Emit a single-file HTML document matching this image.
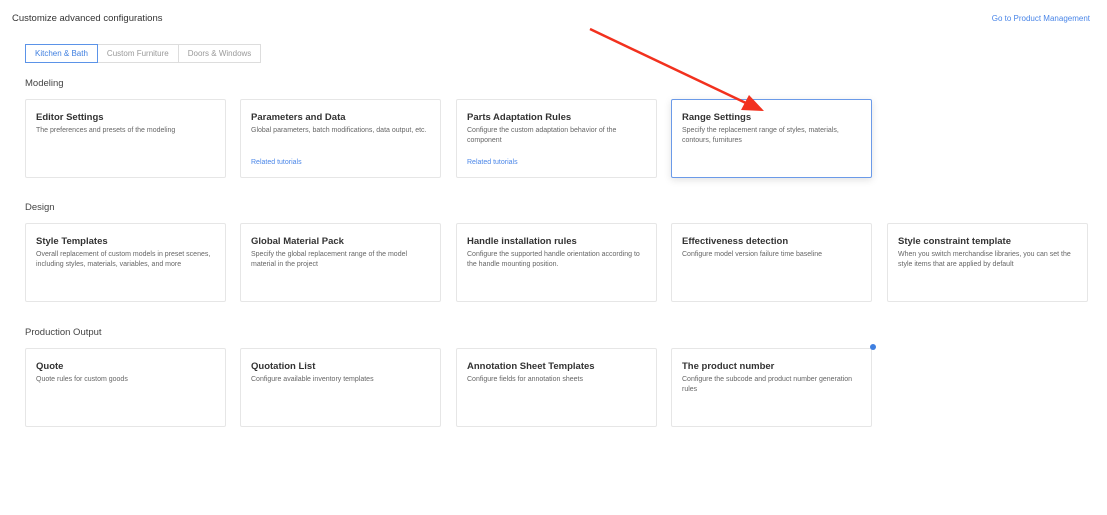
<!DOCTYPE html><html><head><style>
body{margin:0;width:1107px;height:515px;background:#fff;font-family:"Liberation Sans",sans-serif;position:relative;overflow:hidden;color:#333}
.a{position:absolute}
.h{left:12px;top:13px;font-size:9.5px;color:#333}
.link{right:17px;top:14px;font-size:8px;color:#4a86e8}
.tabs{left:25px;top:44px;display:flex;height:19px}
.tabs div{border:1px solid #ddd;font-size:8px;color:#999;padding:0 9px;line-height:18px;margin-left:-1px}
.tabs .on{border-color:#5b93e8;color:#3f7fe0;position:relative;z-index:1;margin-left:0}
.sec{font-size:9.5px;color:#444;left:25px}
.c{position:absolute;width:199px;height:77px;border:1px solid #e6e6e6;border-radius:2px;box-sizing:content-box}
.c b{position:absolute;left:10px;top:12px;font-size:9.5px;color:#333}
.c p{position:absolute;left:10px;top:26px;margin:0;width:176px;font-size:7px;line-height:10px;color:#666}
.c i{position:absolute;left:10px;top:59px;font-style:normal;font-size:7px;color:#4a86e8}
.sel{border-color:#6b9ae8;box-shadow:0 2px 8px rgba(0,0,0,.12)}
</style></head><body>
<div class="a h">Customize advanced configurations</div>
<div class="a link">Go to Product Management</div>
<div class="a tabs"><div class="on">Kitchen &amp; Bath</div><div>Custom Furniture</div><div>Doors &amp; Windows</div></div>
<div class="a sec" style="top:78px">Modeling</div>
<div class="a sec" style="top:202px">Design</div>
<div class="a sec" style="top:327px">Production Output</div>

<div class="c" style="left:25px;top:99px"><b>Editor Settings</b><p>The preferences and presets of the modeling</p></div>
<div class="c" style="left:240px;top:99px"><b>Parameters and Data</b><p style="width:185px">Global parameters, batch modifications, data output, etc.</p><i>Related tutorials</i></div>
<div class="c" style="left:456px;top:99px"><b>Parts Adaptation Rules</b><p>Configure the custom adaptation behavior of the component</p><i>Related tutorials</i></div>
<div class="c sel" style="left:671px;top:99px"><b>Range Settings</b><p>Specify the replacement range of styles, materials, contours, furnitures</p></div>

<div class="c" style="left:25px;top:223px"><b>Style Templates</b><p>Overall replacement of custom models in preset scenes, including styles, materials, variables, and more</p></div>
<div class="c" style="left:240px;top:223px"><b>Global Material Pack</b><p>Specify the global replacement range of the model material in the project</p></div>
<div class="c" style="left:456px;top:223px"><b>Handle installation rules</b><p>Configure the supported handle orientation according to the handle mounting position.</p></div>
<div class="c" style="left:671px;top:223px"><b>Effectiveness detection</b><p>Configure model version failure time baseline</p></div>
<div class="c" style="left:887px;top:223px"><b>Style constraint template</b><p style="width:182px">When you switch merchandise libraries, you can set the style items that are applied by default</p></div>

<div class="c" style="left:25px;top:348px"><b>Quote</b><p>Quote rules for custom goods</p></div>
<div class="c" style="left:240px;top:348px"><b>Quotation List</b><p>Configure available inventory templates</p></div>
<div class="c" style="left:456px;top:348px"><b>Annotation Sheet Templates</b><p>Configure fields for annotation sheets</p></div>
<div class="c" style="left:671px;top:348px"><b>The product number</b><p>Configure the subcode and product number generation rules</p></div>
<div class="a" style="left:870px;top:344px;width:6px;height:6px;border-radius:50%;background:#3f7fe0"></div>

<svg class="a" style="left:0;top:0" width="1107" height="515">
<line x1="590" y1="29" x2="748" y2="104" stroke="#f2311e" stroke-width="2.5"/>
<polygon points="764,111 741,110 749,95" fill="#f2311e"/>
</svg>
</body></html>
